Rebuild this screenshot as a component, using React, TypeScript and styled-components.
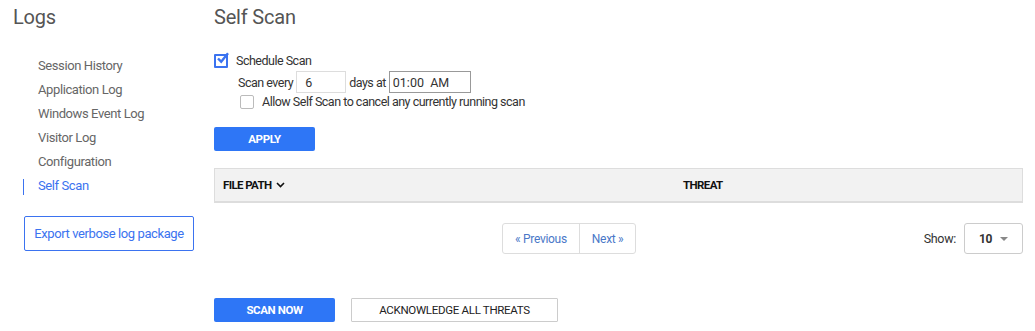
import {createGlobalStyle, styled} from 'styled-components';

const GlobalStyle = createGlobalStyle`
    body {
        margin: 0;
        background: #fff;
        font-family: Roboto, 'Liberation Sans', sans-serif;
        color: #333;
    }
`;

const Page = styled.div`
    display: flex;
    width: 1035px;
    height: 331px;
    overflow: hidden;
`;

const Sidebar = styled.aside`
    width: 214px;
    flex-shrink: 0;
    padding-top: 3px;
`;

const Heading = styled.h1`
    margin: 0;
    font-size: 20px;
    font-weight: 400;
    line-height: 28px;
    color: #555;
    letter-spacing: -0.2px;
`;

const SideHeading = styled(Heading)`
    padding-left: 13px;
`;

const Nav = styled.ul`
    list-style: none;
    margin: 23px 0 0 0;
    padding: 0;
`;

const NavItem = styled.li<{$active?: boolean}>`
    position: relative;
    height: 24px;
    line-height: 24px;
    padding-left: 38px;
    font-size: 13px;
    letter-spacing: -0.4px;
    color: ${p => (p.$active ? '#3b73f0' : '#666')};

    &::before {
        content: '';
        display: ${p => (p.$active ? 'block' : 'none')};
        position: absolute;
        left: 23px;
        top: 5px;
        width: 1px;
        height: 16px;
        background: #3b73f0;
    }
`;

const ExportButton = styled.button`
    margin: 18px 0 0 24px;
    width: 170px;
    height: 35px;
    border: 1px solid #3b73f0;
    border-radius: 2px;
    background: #fff;
    color: #3b73f0;
    font-family: inherit;
    font-size: 13px;
    letter-spacing: -0.4px;
    padding: 0;
`;

const Main = styled.main`
    flex: 1;
    padding-top: 3px;
    padding-right: 12px;
`;

const Form = styled.div`
    margin-top: 22px;
    display: flex;
    flex-direction: column;
`;

const Row = styled.label<{$indent?: number}>`
    display: flex;
    align-items: center;
    gap: 8px;
    padding-left: ${p => p.$indent ?? 0}px;
    font-size: 12.5px;
    letter-spacing: -0.5px;
    color: #333;
`;

const Box = styled.span<{$checked?: boolean}>`
    position: relative;
    width: 12px;
    height: 12px;
    border: 1px solid ${p => (p.$checked ? '#3b73f0' : '#bbb')};
    border-radius: ${p => (p.$checked ? '1px' : '2px')};
    ${p => (p.$checked ? 'border-width: 2px; width: 10px; height: 10px;' : '')}
    background: #fff;
    flex-shrink: 0;

    svg {
        position: absolute;
        left: 0px;
        top: -4px;
    }
`;

const TextInput = styled.input<{$dark?: boolean; $width: number}>`
    box-sizing: border-box;
    width: ${p => p.$width}px;
    height: 22px;
    border: 1px solid ${p => (p.$dark ? '#999' : '#ddd')};
    padding: 0 ${p => (p.$dark ? 3 : 8)}px;
    font-family: inherit;
    font-size: 12.5px;
    color: #333;
    outline: none;
`;

const ScanRow = styled.div`
    display: flex;
    align-items: center;
    gap: 3px;
    margin: 3px 0 0 24px;
    font-size: 12.5px;
    letter-spacing: -0.5px;
    color: #333;
`;

const PrimaryButton = styled.button<{$width: number}>`
    width: ${p => p.$width}px;
    height: 24px;
    border: none;
    border-radius: 2px;
    background: #2e76f6;
    color: #fff;
    font-family: inherit;
    font-weight: 700;
    font-size: 11.5px;
    letter-spacing: -0.4px;
    padding: 0;
`;

const OutlineButton = styled.button<{$width: number}>`
    width: ${p => p.$width}px;
    height: 24px;
    border: 1px solid #ccc;
    border-radius: 1px;
    background: #fff;
    color: #222;
    font-family: inherit;
    font-size: 11.5px;
    letter-spacing: -0.3px;
    padding: 0;
`;

const Table = styled.div`
    margin-top: 17px;
    display: grid;
    grid-template-columns: 460px 1fr;
    height: 32px;
    align-items: center;
    background: #f2f2f2;
    border: 1px solid #ddd;
    border-bottom-width: 2px;
`;

const Th = styled.div`
    display: flex;
    align-items: center;
    gap: 4px;
    padding-left: 8px;
    font-size: 11.5px;
    font-weight: 700;
    letter-spacing: -0.6px;
    color: #111;
`;

const Footer = styled.div`
    display: flex;
    align-items: center;
    margin-top: 20px;
    height: 31px;
`;

const Pager = styled.div`
    display: flex;
    margin-left: 288px;
    border: 1px solid #ddd;
    border-radius: 3px;
    height: 29px;
`;

const PageLink = styled.span<{$first?: boolean}>`
    display: flex;
    align-items: center;
    padding: 0 12px;
    font-size: 12px;
    letter-spacing: -0.3px;
    color: #4a78c8;
    border-left: ${p => (p.$first ? 'none' : '1px solid #ddd')};
`;

const Show = styled.div`
    margin-left: auto;
    display: flex;
    align-items: center;
    gap: 8px;
    font-size: 12.5px;
    color: #333;
    letter-spacing: -0.3px;
`;

const Select = styled.div`
    box-sizing: border-box;
    width: 59px;
    height: 31px;
    border: 1px solid #ccc;
    border-radius: 3px;
    display: flex;
    align-items: center;
    justify-content: space-between;
    padding: 0 14px 0 14px;
    font-size: 12px;
    font-weight: 700;
    color: #333;

    &::after {
        content: '';
        border-left: 4px solid transparent;
        border-right: 4px solid transparent;
        border-top: 4px solid #888;
    }
`;

const Actions = styled.div`
    display: flex;
    gap: 16px;
    margin-top: 44px;
`;

function Check() {
    return (
        <svg width="14" height="14" viewBox="0 0 14 14">
            <path d="M2 6.5 L5.2 9.7 L12 1.2" fill="none" stroke="#3b73f0" strokeWidth="2.4" />
        </svg>
    );
}

const sideItems = ['Session History', 'Application Log', 'Windows Event Log', 'Visitor Log', 'Configuration', 'Self Scan'];

export default function App() {
    return (
        <Page>
            <GlobalStyle />
            <Sidebar>
                <SideHeading>Logs</SideHeading>
                <Nav>
                    {sideItems.map(item => (
                        <NavItem key={item} $active={item === 'Self Scan'}>
                            {item}
                        </NavItem>
                    ))}
                </Nav>
                <ExportButton>Export verbose log package</ExportButton>
            </Sidebar>
            <Main>
                <Heading>Self Scan</Heading>
                <Form>
                    <Row>
                        <Box $checked>
                            <Check />
                        </Box>
                        Schedule Scan
                    </Row>
                    <ScanRow>
                        Scan every
                        <TextInput $width={50} defaultValue="6" />
                        days at
                        <TextInput $width={82} $dark defaultValue="01:00  AM" />
                    </ScanRow>
                    <Row $indent={26} style={{marginTop: 1}}>
                        <Box />
                        Allow Self Scan to cancel any currently running scan
                    </Row>
                    <div style={{marginTop: 18}}>
                        <PrimaryButton $width={101}>APPLY</PrimaryButton>
                    </div>
                </Form>
                <Table>
                    <Th>
                        FILE PATH
                        <svg width="9" height="6" viewBox="0 0 9 6">
                            <path d="M1 1 L4.5 4.5 L8 1" fill="none" stroke="#111" strokeWidth="1.6" />
                        </svg>
                    </Th>
                    <Th>THREAT</Th>
                </Table>
                <Footer>
                    <Pager>
                        <PageLink $first>« Previous</PageLink>
                        <PageLink>Next »</PageLink>
                    </Pager>
                    <Show>
                        Show:
                        <Select>10</Select>
                    </Show>
                </Footer>
                <Actions>
                    <PrimaryButton $width={121}>SCAN NOW</PrimaryButton>
                    <OutlineButton $width={207}>ACKNOWLEDGE ALL THREATS</OutlineButton>
                </Actions>
            </Main>
        </Page>
    );
}
